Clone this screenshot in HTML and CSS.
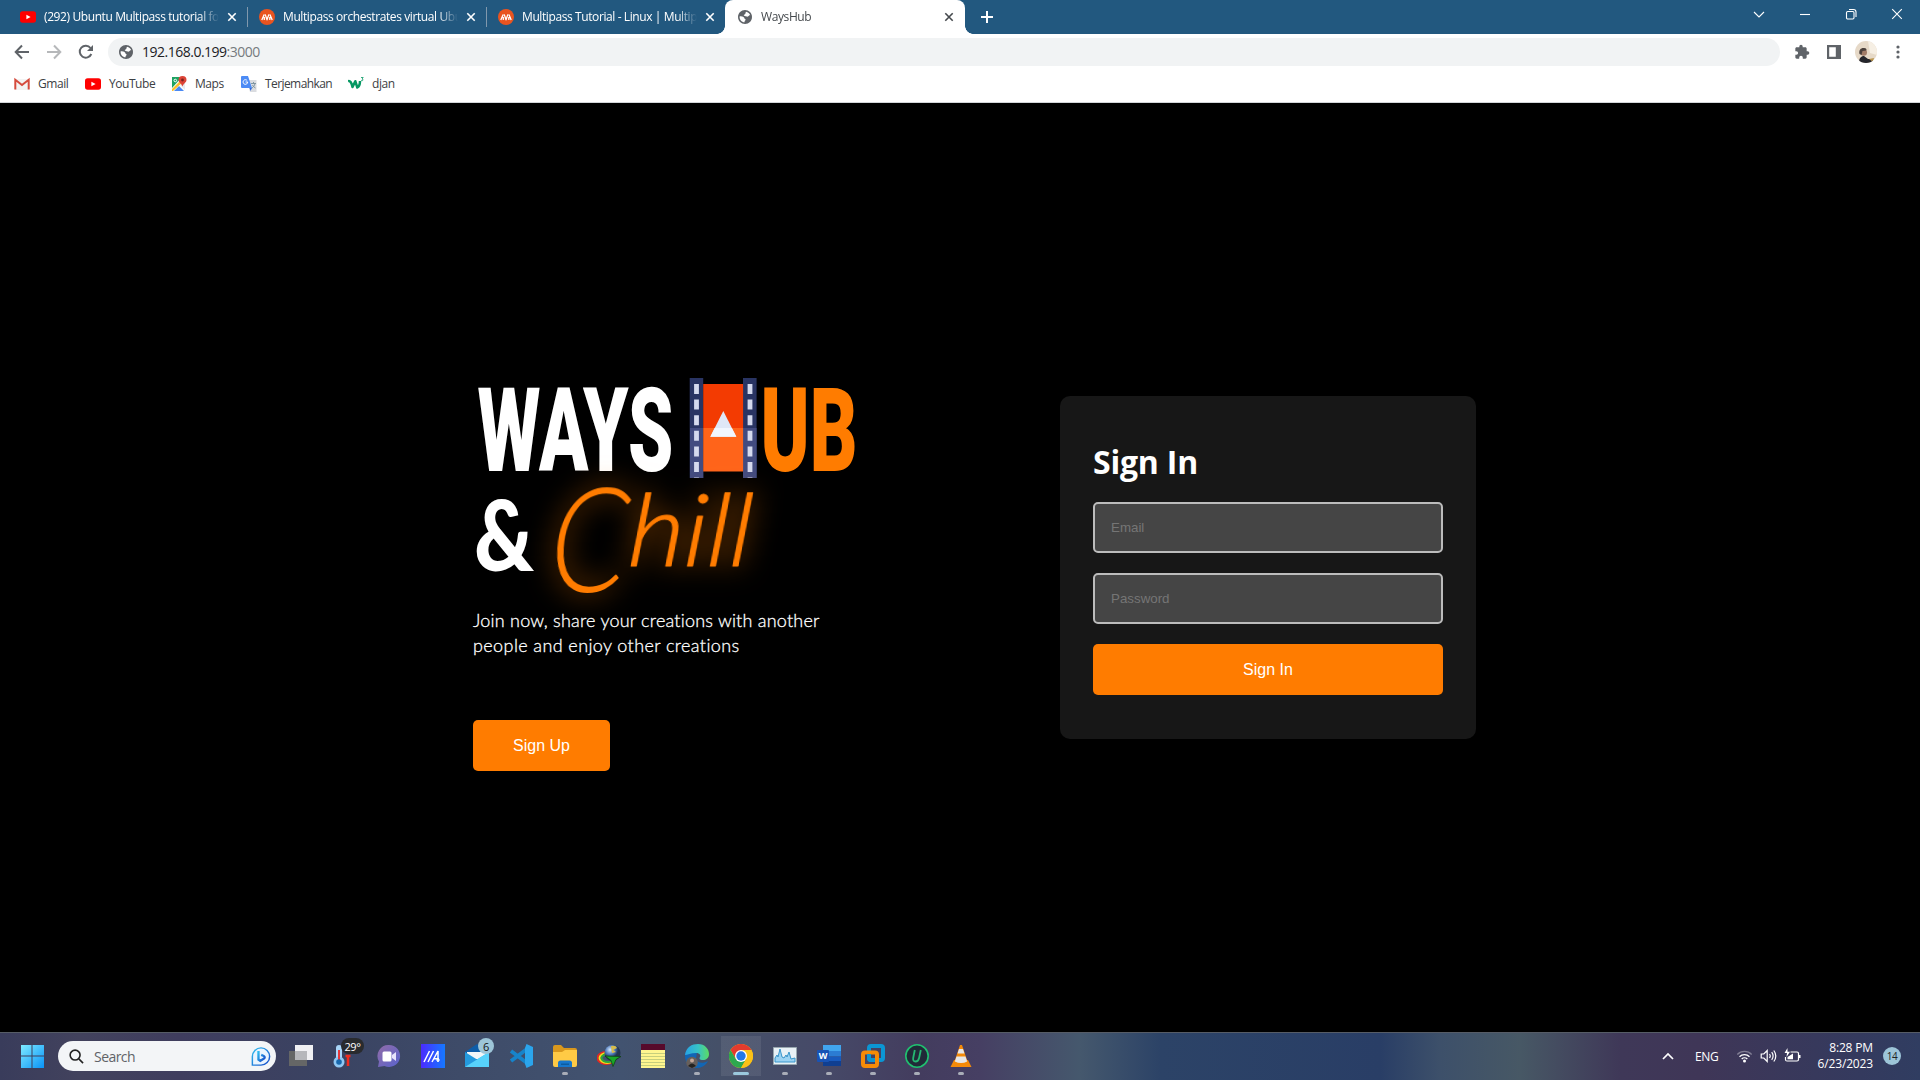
FILE: index.html
```html
<!DOCTYPE html>
<html lang="en">
<head>
<meta charset="utf-8">
<title>WaysHub</title>
<link rel="stylesheet" href="styles.css">
</head>
<body>
<svg width="0" height="0" class="defs">
  <defs>
    <symbol id="x" viewBox="0 0 10 10"><path d="M1.3 1.3l7.4 7.4M8.7 1.3L1.3 8.7" fill="none" stroke="currentColor" stroke-width="1.6"/></symbol>
    <symbol id="yt" viewBox="0 0 16 16"><rect y="2.3" width="16" height="11.4" rx="2.6" fill="#f00"/><path d="M6.4 5.7L10.6 8 6.4 10.3z" fill="#fff"/></symbol>
    <symbol id="mp" viewBox="0 0 16 16"><circle cx="8" cy="8" r="8" fill="#e95420"/><path d="M2.800 11L5.200 5.400M6.200 5.400L8 10.800 9.900 5.400M10.900 5.400L13.200 11M5.300 8v3M10.800 8v3" fill="none" stroke="#fff" stroke-width="1.300" stroke-linejoin="round"/></symbol>
    <symbol id="globe" viewBox="0 0 24 24"><path fill="#5f6368" d="M12 1.500C6.200 1.500 1.500 6.200 1.500 12S6.200 22.500 12 22.500 22.500 17.800 22.500 12 17.800 1.500 12 1.500z"/><path fill="#fff" d="M4 11c2.500.2 5 .2 6.500 1.800 1 .9.500 2 1.500 2.200 1.500.2 1 1.700 0 2.500-.8.700-.6 1.600-.5 2.500-4.700 0-8.200-4-7.500-9zM13.500 4c3 .6 5.500 2.600 6.300 5.500-1.800-.5-2.200.8-2.800 1.500-.8 1-2.500.8-3.500 0-1-.9-2.700-.4-3.200-1.400-.5-1.200.7-1.600 1.700-1.900 1-.3.500-2.500 1.500-3.700z"/></symbol>
  </defs>
</svg>

<header class="tabs">
  <div class="tab"><svg class="fav"><use href="#yt"/></svg><span class="tab-title">(292) Ubuntu Multipass tutorial for beginners</span><svg class="close"><use href="#x"/></svg></div>
  <div class="tab ruled"><svg class="fav"><use href="#mp"/></svg><span class="tab-title">Multipass orchestrates virtual Ubuntu</span><svg class="close"><use href="#x"/></svg></div>
  <div class="tab ruled"><svg class="fav"><use href="#mp"/></svg><span class="tab-title">Multipass Tutorial - Linux | Multipass</span><svg class="close"><use href="#x"/></svg></div>
  <div class="tab active"><svg class="fav"><use href="#globe"/></svg><span class="tab-title">WaysHub</span><svg class="close"><use href="#x"/></svg></div>
  <svg class="plus" viewBox="0 0 12 12"><path d="M6 0v12M0 6h12" stroke="#fff" stroke-width="2"/></svg>
  <div class="win">
    <svg viewBox="0 0 12 12"><path d="M1 4l5 5 5-5" class="wl"/></svg>
    <svg viewBox="0 0 12 12"><path d="M1 6.500h10" class="wl"/></svg>
    <svg viewBox="0 0 12 12"><rect x="1.500" y="3.500" width="7.500" height="7.500" rx="1.200" class="wl"/><path d="M4 1.500h4.500a2.500 2.500 0 0 1 2.500 2.500V9" class="wl"/></svg>
    <svg viewBox="0 0 12 12"><path d="M1.200 1.200l9.600 9.600M10.800 1.200L1.200 10.800" class="wl"/></svg>
  </div>
</header>

<nav class="toolbar">
  <svg class="tb" viewBox="0 0 16 16"><path d="M15 8H2M8 1.500L1.700 8 8 14.500" class="nav-line"/></svg>
  <svg class="tb dim" viewBox="0 0 16 16"><path d="M1 8h13M8 1.500L14.300 8 8 14.500" class="nav-line"/></svg>
  <svg class="tb" viewBox="0 0 16 16"><path d="M13.300 10A6 6 0 1 1 12.500 4" class="nav-line"/><path d="M15 1v6H9z" fill="#5f6368"/></svg>
  <div class="omni"><svg><use href="#globe"/></svg><span class="url">192.168.0.199<i>:3000</i></span></div>
  <svg class="tb ext" viewBox="0 0 24 24"><path fill="#5f6368" d="M20.500 11H19V7c0-1.100-.9-2-2-2h-4V3.500a2.500 2.500 0 0 0-5 0V5H4c-1.100 0-2 .9-2 2v3.800h1.500a2.700 2.700 0 0 1 0 5.400H2V20c0 1.100.9 2 2 2h3.800v-1.500a2.700 2.700 0 0 1 5.400 0V22H17c1.100 0 2-.9 2-2v-4h1.500a2.500 2.500 0 0 0 0-5z"/></svg>
  <svg class="tb" viewBox="0 0 16 16"><path fill="#5f6368" fill-rule="evenodd" d="M1 1h14v14H1zM3.200 3.200v9.600h6.600V3.200z"/></svg>
  <svg class="avatar" viewBox="0 0 22 22"><clipPath id="av"><circle cx="11" cy="11" r="11"/></clipPath><g clip-path="url(#av)"><rect width="22" height="22" fill="#e6d9c8"/><path d="M13 0h9v14l-7-2z" fill="#f6efe4"/><path d="M4 22c0-5 2-7 5-7l4 3 5 0v5z" fill="#24252b"/><circle cx="8.700" cy="11.500" r="3.300" fill="#a27c68"/><path d="M4.500 13c-1-4.500 2-6.500 4.500-6 2.500 0 3 1.700 2.200 2.500L7.500 10l-1 4z" fill="#4b403c"/><path d="M14 18l5-1-1 4z" fill="#ba9650"/></g></svg>
  <svg class="tb" viewBox="0 0 16 16"><g fill="#5f6368"><circle cx="8" cy="3" r="1.600"/><circle cx="8" cy="8" r="1.600"/><circle cx="8" cy="13" r="1.600"/></g></svg>
</nav>

<nav class="bookmarks">
  <a><svg viewBox="0 0 16 16"><path fill="#f3f3f3" d="M1 3h14v11H1z"/><path d="M1.300 13.500V3.800L8 9l6.700-5.200v9.700" fill="none" stroke="#d54b3d" stroke-width="2"/></svg><span class="b1">Gmail</span></a>
  <a><svg><use href="#yt"/></svg><span class="b2">YouTube</span></a>
  <a><svg viewBox="0 0 16 16"><path fill="#1ea362" d="M1 1h10L1 12z"/><path fill="#4a89f3" d="M3 15l5-5 5 5z"/><path fill="#e8eaed" d="M9 9l5 5V6z"/><path fill="#fbc02d" d="M1 13L10 4l2 2-10 9H1z"/><circle cx="4.300" cy="4.500" r="1.300" fill="none" stroke="#fff"/><path fill="#dc4437" d="M11.500 0a4 4 0 0 0-4 4c0 2.500 3 3.500 4 6.500 1-3 4-4 4-6.500a4 4 0 0 0-4-4z"/><circle cx="11.500" cy="4" r="1.400" fill="#7b231e"/></svg><span class="b3">Maps</span></a>
  <a><svg viewBox="0 0 16 16"><path fill="#dadce0" d="M6 4h9.500v12H9z"/><path fill="#4c8bf5" d="M0 1a1 1 0 0 1 1-1h6l4 12H1a1 1 0 0 1-1-1z"/><path fill="#3367d6" d="M8.500 12H11l-1.500 3z"/><path d="M6.200 4.600A2.300 2.300 0 1 0 6.700 6H4.500" fill="none" stroke="#fff" stroke-width="1"/><path d="M10 7.500h5M12.500 6v1.500M14 7.500c-.5 2.500-1.500 3.500-3 4.500M11.500 9c1 2 2 2.500 3 3" fill="none" stroke="#78909c" stroke-width=".9"/></svg><span class="b4">Terjemahkan</span></a>
  <a><svg viewBox="0 0 16 16"><path d="M0 5.200Q3 4 4.500 11L7.300 5.200 9.300 11.500Q12 10 12 5" fill="none" stroke="#059862" stroke-width="2.500" stroke-linejoin="round"/><path d="M13 1.500h2.200l-1.200 1.600c1.800.1 1.200 2.200-1 1.400" fill="none" stroke="#059862" stroke-width=".8"/></svg><span class="b5">djan</span></a>
</nav>

<main class="page">
  <section class="hero">
    <svg class="logo" viewBox="473 370 400 240">
      <text x="477.500" y="470.700" class="ways" textLength="196" lengthAdjust="spacingAndGlyphs">WAYS</text>
      <path fill="#293463" d="M689.700 378h13.500v100h-13.500zM743 378h13.600v100H743z"/>
      <path fill="#424b80" d="M690 428h13.300v50H690zM743 428h13.600v50H743z"/>
      <path fill="#f33b02" d="M703.200 384h39.900v44h-39.900z"/><path fill="#ff641a" d="M703.200 428h39.900v43.600h-39.900z"/>
      <path d="M696.500 384v94M750 384v94" stroke="#d5daee" stroke-width="4.800" stroke-dasharray="10 5.600"/>
      <path fill="#dfe7f6" d="M723.300 411l13 25.700h-26z"/><path fill="#f1f6fe" d="M714.700 428h17.200l4.400 8.700h-26z"/>
      <text x="760.500" y="470.700" class="ways hub" textLength="97" lengthAdjust="spacingAndGlyphs">UB</text>
      <text x="474" y="571" class="amp" textLength="60" lengthAdjust="spacingAndGlyphs">&amp;</text>
      <text class="chill" transform="translate(547 592) skewX(-4)"><tspan class="cap" x="0" y="0" textLength="78" lengthAdjust="spacingAndGlyphs">C</tspan><tspan x="78" y="-26" textLength="124" lengthAdjust="spacingAndGlyphs">hill</tspan></text>
    </svg>
    <p>Join now, share your creations with another<br><span>people and enjoy other creations</span></p>
    <button class="btn signup">Sign Up</button>
  </section>
  <form class="card">
    <h2><span>Sign In</span></h2>
    <input type="email" placeholder="Email">
    <input type="password" placeholder="Password">
    <button type="button" class="btn">Sign In</button>
  </form>
</main>

<footer class="taskbar">
  <div class="cell start"><svg viewBox="0 0 24 24"><defs><linearGradient id="win" x1="0" y1="0" x2="1" y2="1"><stop stop-color="#7eeaff"/><stop offset="1" stop-color="#0993f7"/></linearGradient></defs><path fill="url(#win)" d="M1 1h10.500v10.500H1zM12.500 1H24v10.500H12.500zM1 12.500h10.500V24H1zM12.500 12.500H24V24H12.500z"/></svg></div>
  <div class="search"><svg viewBox="0 0 16 16"><circle cx="6.500" cy="6.500" r="5.300" class="lens"/><path d="M10.500 10.500L15 15" class="lens"/></svg><span>Search</span>
    <svg class="bing" viewBox="0 0 22 22"><defs><linearGradient id="bg" x1="0" y1="0" x2="1" y2="1"><stop stop-color="#32bff0"/><stop offset="1" stop-color="#1549c8"/></linearGradient></defs><path d="M1.500 20.500V11A9.500 9.500 0 1 1 11 20.500z" fill="#e9f4ff" stroke="url(#bg)" stroke-width="1.600"/><path d="M8.200 5v9.500l2 1.200 4.300-2.600c1-.9.400-2.300-1-2.900l-2.300-.9" fill="none" stroke="url(#bg)" stroke-width="2.600"/></svg></div>
  <div class="cell"><svg viewBox="0 0 24 24"><path fill="#656666" d="M0 7h18v15H0z"/><path fill="#f0f0f3" d="M6 1h18v15H6z"/><path fill="#b6b7bb" d="M6 7h12v9H6z"/></svg></div>
  <div class="cell"><svg viewBox="0 0 24 24"><path d="M6 4v14" stroke="#a9d6f8" stroke-width="6" stroke-linecap="round"/><circle cx="6" cy="18" r="5.500" fill="#8fc7f3"/><path d="M6 6v12" stroke="#e5383b" stroke-width="2"/><circle cx="6" cy="18" r="2.800" fill="#1768ae"/><path d="M15 13v9M12.500 12h5" stroke="#f22c1d" stroke-width="2.500"/></svg><b class="badge temp">29°</b></div>
  <div class="cell"><svg viewBox="0 0 24 24"><defs><linearGradient id="ch" x1="0" y1="0" x2="1" y2="1"><stop stop-color="#916ca8"/><stop offset="1" stop-color="#5963cd"/></linearGradient></defs><path fill="url(#ch)" d="M12 1a11 11 0 1 1-4.500 21L1 23l1-5.500A11 11 0 0 1 12 1z"/><rect x="5.500" y="7.500" width="9" height="10" rx="1.500" fill="#fff"/><path fill="#e8e3fc" d="M15 11l4-3v9l-4-3z"/></svg></div>
  <div class="cell"><svg viewBox="0 0 24 24"><defs><linearGradient id="me" x1="0" x2="1"><stop stop-color="#4b2bff"/><stop offset="1" stop-color="#1579ff"/></linearGradient></defs><path fill="url(#me)" d="M0 0h24v24H0z"/><path d="M3 18L8.500 7M7 18l5.500-11M11 18l6-11v11M13 14.500l5 .5" fill="none" stroke="#fff" stroke-width="1.500"/><path d="M17 14v4M15 16h4" stroke="#fff"/></svg></div>
  <div class="cell"><svg viewBox="0 0 24 24"><path fill="#0f5da8" d="M0 8L12 0l12 8v6H0z"/><path fill="#f3f6f8" d="M2 8h20v7H2z"/><path fill="#36c3f5" d="M24 8v15H0z"/><path fill="#249ade" d="M0 8l24 15H0z"/><path fill="#57d2fb" d="M0 23L24 8v15z"/></svg><b class="badge six">6</b></div>
  <div class="cell"><svg viewBox="0 0 24 24"><path d="M18 5L2 17M18 19L2 7" stroke="#1684ca" stroke-width="3.800"/><path fill="#2ba5ec" d="M17.500 0L24 3v18l-6.500 3-1.500-4V4z"/></svg></div>
  <div class="cell run"><svg viewBox="0 0 24 24"><path fill="#d9981d" d="M0 3q0-2 2-2h6l3 3h11q2 0 2 2v5H0z"/><path fill="#ffca45" d="M0 8h9l3-2h12v15q0 2-2 2H2q-2 0-2-2z"/><path fill="#1777cb" d="M5 23v-4q0-2.500 2.500-2.500h9Q19 16.500 19 19v4z"/><path fill="#0d5c9f" d="M8 19.500h8V21H8z"/></svg></div>
  <div class="cell"><svg viewBox="0 0 24 24"><defs><radialGradient id="id" cx=".35" cy=".3"><stop stop-color="#d8ecff"/><stop offset=".6" stop-color="#4c77b8"/><stop offset="1" stop-color="#23354f"/></radialGradient></defs><g fill="none" stroke-width="2"><ellipse cx="9" cy="14" rx="8.500" ry="6" stroke="#e42822"/><ellipse cx="10" cy="14" rx="7.500" ry="5" stroke="#f7df18"/><ellipse cx="11" cy="14" rx="6.500" ry="4" stroke="#2da63d"/></g><circle cx="15.500" cy="9" r="8" fill="url(#id)"/><path fill="#d8bd4a" d="M14 2q5-1 6 2l-4 2 3 2-4 1z"/><path fill="#19a628" stroke="#123f17" stroke-width=".8" d="M8 12l16 .5-5 3-3 7-2-6z"/></svg></div>
  <div class="cell"><svg viewBox="0 0 24 24"><path fill="#fff68f" d="M0 0h24v24H0z"/><path fill="#570a2b" d="M0 0h24v6H0z"/><path d="M0 9.500h24M0 12.500h24M0 15.500h24M0 18.500h24M0 21.500h24" stroke="#c7cf7d" stroke-width="1"/></svg></div>
  <div class="cell run"><svg viewBox="0 0 24 24"><defs><linearGradient id="ed" x1="0" x2="1"><stop stop-color="#28a3e4"/><stop offset=".55" stop-color="#37c3c6"/><stop offset="1" stop-color="#5cdc62"/></linearGradient></defs><path fill="#1266b5" d="M0 12C0 5 8 4 12 8l-1 7c1 4 7 5 12 2-2 4-6 7-11 7C5 24 0 19 0 12z"/><path fill="url(#ed)" d="M0 11C1 3 7 0 13 0c7 0 11 5 11 10 0 4-3 6-6 6-3.500 0-4-1.500-3-3 .8-1.300.3-4-4-4-5 0-9 2-11 2z"/><circle cx="7" cy="18.500" r="5.800" fill="#675f5b"/><circle cx="7" cy="16.500" r="2" fill="#c3a799"/><path fill="#242322" d="M3 22q4-5 8 0l-4 2z"/></svg></div>
  <div class="cell run current"><svg viewBox="0 0 24 24"><circle cx="12" cy="12" r="12" fill="#fbc116"/><path fill="#e33b2e" d="M1.600 6A12 12 0 0 1 22.400 6H12l-5.200 9z"/><path fill="#2da94f" d="M1.600 6A12 12 0 0 0 12 24l5.200-9H6.800z"/><path fill="#fbc116" d="M22.400 6H12l5.200 9L12 24A12 12 0 0 0 22.400 6z"/><circle cx="12" cy="12" r="6" fill="#fff"/><circle cx="12" cy="12" r="4.700" fill="#2277e8"/></svg></div>
  <div class="cell run"><svg viewBox="0 0 24 24"><path fill="#e8f1f6" stroke="#99a8b0" d="M.5 3.500h23v17H.5z"/><path fill="#9bd3f3" stroke="#3995ca" d="M2 18v-4l2-3 1 2 2-8 2 8 2 1 2-3 1 2 2-5 2 7 4-1v4z"/></svg></div>
  <div class="cell run"><svg viewBox="0 0 24 24"><path fill="#41a5ee" d="M6 1h18v6H6z"/><path fill="#2b7cd3" d="M6 7h18v5.500H6z"/><path fill="#185abd" d="M6 12.500h18V17H6z"/><path fill="#103f91" d="M6 17h18v5H6z"/><rect y="6" width="12" height="12" rx="1" fill="#1853b5"/><text x="6" y="15.300" class="w">W</text></svg></div>
  <div class="cell run"><svg viewBox="0 0 24 24"><g fill="none" stroke-width="4"><rect x="8" y="2" width="14" height="14" rx="2" stroke="#0b96d4"/><rect x="2" y="8.500" width="14" height="13.500" rx="2" stroke="#f68b08"/><path d="M8 10v4q0 2 2 2h3" stroke="#0b96d4"/></g></svg></div>
  <div class="cell run"><svg viewBox="0 0 24 24"><circle cx="12" cy="12" r="11.200" fill="#202b38" stroke="#20c070" stroke-width="1.600"/><path d="M9.800 6L8.200 14q-.5 3.500 2.300 3.500t3.600-3.500L15.800 6" fill="none" stroke="#25b872" stroke-width="1.800"/></svg></div>
  <div class="cell run"><svg viewBox="0 0 24 24"><path fill="#f48b0b" d="M5 16h14l3.500 7h-21z"/><path fill="#f58a08" d="M11 1h2l6 18q-7 4-14 0z"/><path fill="#e7e7e7" d="M10 5h4l1.500 4.500h-7zM7.500 12.500h9l1.700 5q-6 3-12.400 0z"/></svg></div>
  <div class="tray">
    <svg class="up" viewBox="0 0 12 12"><path d="M1 9l5-5 5 5" fill="none" stroke="#fff" stroke-width="1.700"/></svg>
    <span class="lang">ENG</span>
    <svg class="ti" viewBox="0 0 16 16"><g fill="none" stroke="#fff" stroke-width="1.300"><path d="M.8 6.500a10 10 0 0 1 14.400 0" opacity=".35"/><path d="M3 8.700a7 7 0 0 1 10 0M5.200 11a4 4 0 0 1 5.600 0"/></g><circle cx="8" cy="13" r="1.500" fill="#fff"/></svg>
    <svg class="ti" viewBox="0 0 16 16"><path d="M.7 6h2.600l3.400-3.500v11L3.300 10H.7zM9 6q1.500 2 0 4M11.200 4.200q2.800 3.800 0 7.600M13.300 2.500q4 5.500 0 11" fill="none" stroke="#fff" stroke-width="1.200"/></svg>
    <svg class="ti" viewBox="0 0 16 16"><path d="M6 4h6.500q1.500 0 1.500 1.500v6q0 1.500-1.500 1.500H2.500Q1 13 1 11.500V9" fill="none" stroke="#fff" stroke-width="1.200"/><path fill="#fff" d="M14 7h2v3h-2zM3 11.300V9l5.500-3.500v5.800zM3 0L0 5h2.500L2 9l3.500-5.300H3z"/></svg>
    <div class="clock"><span>8:28 PM</span><span>6/23/2023</span></div>
    <b class="count">14</b>
  </div>
</footer>
</body>
</html>
```
FILE: styles.css
```css
* { box-sizing: border-box; }
body { margin: 0; width: 1920px; height: 1080px; overflow: hidden; display: flex; flex-direction: column; background: #000; font: 12px "Open Sans", "Noto Sans", sans-serif; }
svg { flex: none; display: block; }
.defs { position: absolute; }

.tabs { height: 34px; background: #22587f; display: flex; align-items: center; padding-left: 8px; }
.tab { width: 239px; height: 34px; display: flex; align-items: center; padding: 0 10px 0 12px; color: #fff; }
.tab.ruled { background: linear-gradient(#8098ad, #8098ad) 0 7px / 1px 20px no-repeat; }
.fav { width: 16px; height: 16px; margin-right: 8px; }
.tab-title { width: 176px; margin-right: 7px; padding-bottom: 1px; overflow: hidden; white-space: nowrap; letter-spacing: -.4px; font-weight: 500; -webkit-mask-image: linear-gradient(90deg, #000 155px, transparent 175px); }
.close { width: 10px; height: 10px; }
.active { position: relative; width: 240px; padding-left: 12px; background: #fff; color: #45494d; border-radius: 8px 8px 0 0; }
.active .tab-title { font-weight: 400; }
.active::before, .active::after { content: ""; position: absolute; bottom: 0; width: 8px; height: 8px; }
.active::before { left: -8px; background: radial-gradient(circle at 0 0, transparent 7.5px, #fff 8px); }
.active::after { right: -8px; background: radial-gradient(circle at 100% 0, transparent 7.5px, #fff 8px); }
.plus { width: 12px; height: 12px; margin-left: 16px; }
.win { margin-left: auto; height: 28px; display: flex; align-items: center; gap: 34px; padding: 0 17px 0 0; align-self: flex-start; }
.win svg { width: 12px; height: 12px; }
.wl { fill: none; stroke: #fff; stroke-width: 1.1; }

.toolbar { height: 35px; background: #fff; display: flex; align-items: center; gap: 16px; padding-left: 14px; }
.tb { width: 16px; height: 16px; }
.ext { margin-left: -2px; }
.dim { opacity: .45; }
.nav-line { fill: none; stroke: #5f6368; stroke-width: 2; }
.omni { width: 1672px; height: 28px; margin-left: -2px; border-radius: 14px; background: #f1f3f4; display: flex; align-items: center; padding-left: 10px; }
.omni svg { width: 16px; height: 16px; margin-right: 8px; }
.url { font-size: 14px; color: #202124; letter-spacing: -.5px; }
.url i { font-style: normal; color: #767a7e; }
.avatar { width: 22px; height: 22px; margin: 0 -3px; }

.bookmarks { height: 34px; background: #fff; border-bottom: 1px solid #d3d6d9; display: flex; align-items: center; gap: 16px; padding: 0 0 4px 14px; color: #3c4043; }
.bookmarks a { display: flex; align-items: center; gap: 8px; }
.bookmarks svg { width: 16px; height: 16px; }
.bookmarks span { letter-spacing: -.45px; white-space: nowrap; }
.b1 { width: 31px; } .b2 { width: 46px; } .b3 { width: 30px; } .bookmarks .b4 { width: 67px; letter-spacing: -.58px; }

.page { height: 929px; display: flex; align-items: flex-start; padding-left: 473px; }
.hero { width: 587px; padding-top: 267px; }
.logo { width: 400px; height: 240px; overflow: visible; }
.ways { font: 900 117.3px Roboto, sans-serif; fill: #fff; }
.hub { fill: #ff7c00; }
.amp { font: 900 98px Lato, sans-serif; fill: #fff; }
.chill { font: italic 300 100px Lato, sans-serif; fill: #ff7c00; stroke: #ff7c00; stroke-width: 1px; stroke-linejoin: round; filter: drop-shadow(0 0 14px #ff7c00b0); }
.cap { font-size: 146px; stroke-width: 0; }
.hero p { margin: -2px 0 0; height: 112px; font: 300 18px/25px Lato, sans-serif; color: #fff; -webkit-text-stroke: .3px #fff; letter-spacing: .22px; white-space: nowrap; }
.hero p span { letter-spacing: .4px; }
.btn { display: block; height: 51px; border: 0; border-radius: 5px; padding: 0; background: #ff7c00; color: #fff; font: 16px "Liberation Sans", Arial, sans-serif; }
.signup { width: 137px; }
.card { width: 416px; height: 343px; margin-top: 293px; padding: 0 33px; border-radius: 10px; background: #171717; display: flex; flex-direction: column; gap: 20px; }
.card h2 { margin: 0; height: 86px; padding-top: 44px; font-size: 32px; line-height: 44px; color: #fff; letter-spacing: -.2px; }
.card input { height: 51px; margin: 0; border: 2px solid #bcbcbc; border-radius: 5px; padding: 0 16px; background: #454545; font: 13.333px "Liberation Sans", Arial, sans-serif; }
.card input::placeholder { color: #757575; }

.taskbar { height: 48px; border-top: 1px solid #565c66; display: flex; align-items: center; padding-left: 10px; background: linear-gradient(90deg, #393c5b 0, #42425d 80px, #3f3d5e 180px, #3a4362 330px, #3e4b68 460px, #425370 620px, #455068 720px, #464a68 820px, #433c5e 920px, #463f63 980px, #45586d 1080px, #2c4367 1160px, #293e66 1380px, #3d506a 1440px, #475865 1520px, #3f3858 1620px, #3f3657 1700px, #343a5e 1860px, #303d61 1920px); }
.cell { position: relative; width: 44px; height: 47px; display: grid; place-items: center; }
.cell svg { width: 24px; height: 24px; margin-bottom: 1px; }
.start { margin-right: 4px; }
.current { background: linear-gradient(#ffffff14, #ffffff14) center 3px / 40px 40px no-repeat; }
.run::after { content: ""; position: absolute; left: 19px; bottom: 5px; width: 6px; height: 3px; border-radius: 2px; background: #a9adb8; }
.current::after { left: 14px; width: 16px; background: #9bc9dd; }
.search { width: 218px; height: 30px; margin: 0 3px 1px 0; border-radius: 15px; background: #f3f5f7; display: flex; align-items: center; padding: 0 5px 0 11px; color: #616367; font-size: 14px; letter-spacing: -.55px; }
.search > svg:first-child { width: 15px; height: 15px; margin-right: 10px; }
.lens { fill: none; stroke: #222; stroke-width: 1.7; }
.search .bing { width: 20px; height: 21px; margin-left: auto; }
.badge { position: absolute; display: grid; place-items: center; font-weight: 400; letter-spacing: -.4px; }
.temp { left: 18px; top: 5px; width: 23px; height: 16px; border-radius: 8px; background: #292b2e; color: #fff; font-size: 11px; }
.six { left: 23px; top: 5px; width: 16px; height: 16px; border-radius: 8px; background: #9dc5d8; color: #111; font-size: 11px; }
.w { font: 700 9px "Open Sans", sans-serif; fill: #fff; text-anchor: middle; }
.tray { margin-left: auto; padding: 0 19px 1px 0; height: 47px; display: flex; align-items: center; color: #fff; }
.up { width: 12px; height: 12px; margin-right: 21px; }
.lang { width: 23px; letter-spacing: -.4px; margin-right: 18px; padding-top: 1px; }
.ti { width: 17px; height: 16px; margin-right: 7px; }
.clock { width: 65px; display: flex; flex-direction: column; align-items: flex-end; line-height: 16px; letter-spacing: -.15px; }
.count { width: 18px; height: 18px; margin-left: 10px; border-radius: 9px; background: #9dc5d8; color: #222; font-size: 10px; font-weight: 400; letter-spacing: -.4px; display: grid; place-items: center; }
```
